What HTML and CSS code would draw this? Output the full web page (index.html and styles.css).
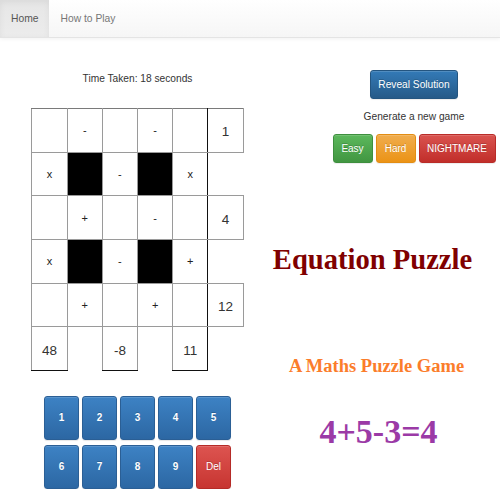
FILE: index.html
```html
<!DOCTYPE html>
<html lang="en">
<head>
<meta charset="utf-8">
<title>Equation Puzzle</title>
<link rel="stylesheet" href="styles.css">
</head>
<body>
<nav class="navbar">
  <a class="nav-item active" href="#">Home</a>
  <a class="nav-item" href="#">How to Play</a>
</nav>
<main class="layout">
  <section class="left">
    <p class="timer">Time Taken: 18 seconds</p>
    <table class="board">
      <tr>
        <td class="b"></td><td class="b op">-</td><td class="b"></td><td class="b op">-</td><td class="b c5"></td><td class="b num">1</td>
      </tr>
      <tr>
        <td class="b op">x</td><td class="b blk"></td><td class="b op">-</td><td class="b blk"></td><td class="b op c5">x</td><td></td>
      </tr>
      <tr>
        <td class="b"></td><td class="b op">+</td><td class="b"></td><td class="b op">-</td><td class="b c5"></td><td class="b num">4</td>
      </tr>
      <tr>
        <td class="b op">x</td><td class="b blk"></td><td class="b op">-</td><td class="b blk"></td><td class="b op c5">+</td><td></td>
      </tr>
      <tr>
        <td class="b"></td><td class="b op">+</td><td class="b"></td><td class="b op">+</td><td class="b c5"></td><td class="b num">12</td>
      </tr>
      <tr>
        <td class="b num last">48</td><td></td><td class="b num last">-8</td><td></td><td class="b num last c5">11</td><td></td>
      </tr>
    </table>
    <div class="keypad">
      <button class="key">1</button>
      <button class="key">2</button>
      <button class="key">3</button>
      <button class="key">4</button>
      <button class="key">5</button>
      <button class="key">6</button>
      <button class="key">7</button>
      <button class="key">8</button>
      <button class="key">9</button>
      <button class="key key-del">Del</button>
    </div>
  </section>
  <section class="right">
    <div class="controls">
      <button class="btn btn-primary">Reveal Solution</button>
      <p class="gen">Generate a new game</p>
      <div class="levels">
        <button class="btn btn-success">Easy</button>
        <button class="btn btn-warning">Hard</button>
        <button class="btn btn-danger">NIGHTMARE</button>
      </div>
    </div>
    <div class="brand">
      <h1 class="title">Equation Puzzle</h1>
      <h2 class="subtitle">A Maths Puzzle Game</h2>
      <h3 class="sample">4+5-3=4</h3>
    </div>
  </section>
</main>
</body>
</html>
```
FILE: styles.css
```css
* { box-sizing: border-box; }

body {
  margin: 0;
  font-family: "Liberation Sans", Arial, sans-serif;
  font-size: 10px;
  color: #333;
  background: #fff;
}

.navbar {
  display: flex;
  height: 38px;
  background: linear-gradient(to bottom, #ffffff 0, #f6f6f6 100%);
  border-bottom: 1px solid #e4e4e4;
  box-shadow: 0 1px 4px rgba(0, 0, 0, 0.06);
}

.nav-item {
  display: flex;
  align-items: center;
  padding: 0 11px;
  color: #777;
  text-decoration: none;
  font-size: 10.3px;
}

.nav-item.active {
  color: #555;
  background: linear-gradient(to bottom, #e6e6e6 0, #ececec 100%);
  box-shadow: inset 0 2px 6px rgba(0, 0, 0, 0.06);
}

.layout {
  display: flex;
}

.left {
  width: 275px;
  display: flex;
  flex-direction: column;
  align-items: center;
}

.timer {
  margin: 34px 0 0;
  line-height: 14px;
  font-size: 10.2px;
  color: #333;
}

.board {
  margin-top: 22px;
  border-collapse: collapse;
  table-layout: fixed;
  width: 212px;
}

.board td {
  width: 35.2px;
  height: 43.67px;
  padding: 0;
  text-align: center;
  vertical-align: middle;
  color: #222;
}

.board td.b { border: 1px solid #9a9a9a; }
.board tr:first-child td.b { border-top-color: #7a7a7a; }
.board td.c5 { border-right-color: #111; }
.board td.last { border-bottom-color: #111; }
.board td.blk { background: #000; }

.board td.op { font-size: 11px; }
.board td.num { font-size: 13.5px; padding-top: 3px; color: #333; }

.keypad {
  margin-top: 25px;
  display: grid;
  grid-template-columns: repeat(5, 35px);
  column-gap: 3px;
  row-gap: 5px;
}

.key {
  height: 44px;
  padding: 0;
  border: 1px solid #2b5f95;
  border-radius: 3px;
  background: linear-gradient(to bottom, #3d82c4 0, #2c67a3 100%);
  box-shadow: inset 0 1px 0 rgba(255, 255, 255, 0.15), 0 1px 1px rgba(0, 0, 0, 0.1);
  color: #fff;
  font-family: "Liberation Sans", Arial, sans-serif;
  font-size: 10px;
  font-weight: bold;
  text-shadow: 0 -1px 0 rgba(0, 0, 0, 0.2);
}

.key-del {
  border-color: #b52b27;
  background: linear-gradient(to bottom, #dd5450 0, #c73531 100%);
  font-weight: normal;
}

.right {
  width: 225px;
  display: flex;
  flex-direction: column;
}

.controls {
  margin-top: 32px;
  padding-left: 53px;
  display: flex;
  flex-direction: column;
  align-items: center;
}

.btn {
  height: 29px;
  padding: 0;
  border: 1px solid transparent;
  border-radius: 3px;
  color: #fff;
  font-family: "Liberation Sans", Arial, sans-serif;
  font-size: 10px;
  white-space: nowrap;
  text-shadow: 0 -1px 0 rgba(0, 0, 0, 0.2);
  box-shadow: inset 0 1px 0 rgba(255, 255, 255, 0.15), 0 1px 1px rgba(0, 0, 0, 0.075);
}

.btn-primary {
  width: 88px;
  font-size: 10.2px;
  background: linear-gradient(to bottom, #337ab7 0, #265a88 100%);
  border-color: #245580;
}

.btn-success {
  width: 40px;
  background: linear-gradient(to bottom, #5cb85c 0, #419641 100%);
  border-color: #3e8f3e;
}

.btn-warning {
  width: 40px;
  background: linear-gradient(to bottom, #f0ad4e 0, #eb9316 100%);
  border-color: #e38d13;
}

.btn-danger {
  width: 77px;
  background: linear-gradient(to bottom, #d9534f 0, #c12e2a 100%);
  border-color: #b92c28;
}

.gen {
  margin: 11px 0 10px;
  line-height: 14px;
  font-size: 10.2px;
  color: #333;
}

.levels {
  display: flex;
  gap: 3px;
}

.brand {
  margin-left: -28px;
  text-align: center;
  font-family: "Liberation Serif", "Times New Roman", serif;
  font-weight: bold;
}

.title {
  margin: 82px 0 0;
  padding-right: 2px;
  font-size: 28.6px;
  line-height: 29px;
  color: #800000;
}

.subtitle {
  margin: 83px 0 0;
  padding-left: 6px;
  font-size: 18.5px;
  line-height: 18.5px;
  color: #fb7d2b;
}

.sample {
  margin: 39px 0 0;
  padding-left: 10px;
  font-size: 34px;
  line-height: 34px;
  color: #9b3aa6;
}
```
